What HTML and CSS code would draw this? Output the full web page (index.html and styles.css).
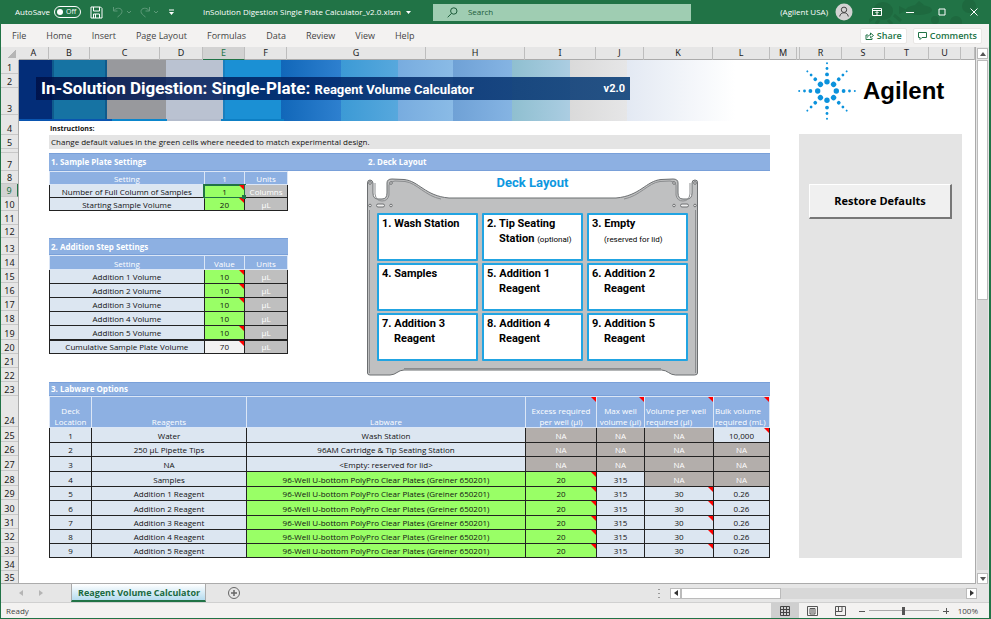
FILE: index.html
```html
<!DOCTYPE html>
<html lang="en">
<head>
<meta charset="utf-8">
<title>InSolution Digestion Single Plate Calculator</title>
<link rel="stylesheet" href="styles.css">
</head>
<body>
<div class="app">
  <header class="titlebar">
    <label class="autosave">AutoSave <input type="checkbox" class="switch-input"><span class="switch">Off</span></label>
    <button class="tool" aria-label="Save"><svg width="13" height="13" viewBox="0 0 13 13" fill="none" stroke="#fff"><path d="M1 1h9.500l1.500 1.500V12H1zM3.500 1v4h6V1M3.500 12V8h6v4M5.500 8v4"/></svg></button>
    <button class="tool undo" aria-label="Undo"><svg width="20" height="12" viewBox="0 0 20 12" fill="none" stroke="#5d9a79"><path d="M1.500 1v4h4M1.500 5C4 1 10 1.500 10 5.500c0 2-2 3.500-4.500 5.500M15 5l2 2 2-2"/></svg></button>
    <button class="tool redo" aria-label="Redo"><svg width="20" height="12" viewBox="0 0 20 12" fill="none" stroke="#5d9a79"><path d="M10.500 1v4h-4M10.500 5C8 1 2 1.500 2 5.500c0 2 2 3.500 4.500 5.500M15 5l2 2 2-2"/></svg></button>
    <button class="tool more" aria-label="Customize toolbar"><svg width="7" height="7" viewBox="0 0 7 7"><path d="M1 1h5" stroke="#fff"/><path d="M1 3h5L3.500 6z" fill="#fff"/></svg></button>
    <span class="filename">InSolution Digestion Single Plate Calculator_v2.0.xlsm <svg width="5" height="3" viewBox="0 0 5 3"><path d="M0 0h5L2.500 3z" fill="#fff"/></svg></span>
    <label class="search"><svg width="11" height="11" viewBox="0 0 11 11" fill="none" stroke="#1d5c3a"><circle cx="6.800" cy="4" r="3.200"/><path d="M4.500 6.400L.7 10.300"/></svg><input type="search" placeholder="Search" aria-label="Search"></label>
    <div class="account">
      <svg class="doodle" viewBox="0 0 120 24" aria-hidden="true"><g fill="#1e693f"><ellipse cx="14" cy="11" rx="10" ry="9"/><path d="M5 17l-6 5M10 20l-3 4M19 20l4 4M25 15l7 6" stroke="#1e693f" stroke-width="3"/><ellipse cx="50" cy="10" rx="13" ry="5"/><path d="M38 10l-8-4v8zM46 5l4-4 5 4z"/><circle cx="87" cy="22" r="6"/><circle cx="66" cy="20" r="4"/><circle cx="100" cy="6" r="7"/></g></svg>
      <span class="user">(Agilent USA)</span>
      <svg class="avatar" width="18" height="18" viewBox="0 0 18 18"><circle cx="9" cy="9" r="8.500" fill="#d2d2d2"/><g fill="none" stroke="#444"><circle cx="9" cy="6.800" r="2.700"/><path d="M4.700 13.500c.5-5 8.100-5 8.600 0"/></g></svg>
      <button class="tool" aria-label="Ribbon display"><svg width="10" height="8" viewBox="0 0 10 8" fill="none" stroke="#fff"><path d="M.5.5h9v7h-9zM.5 2.500h9M5 7V4M3.500 5L5 3.500 6.500 5"/></svg></button>
      <button class="tool" aria-label="Minimize"><svg width="8" height="8" viewBox="0 0 8 8"><path d="M0 4.500h8" stroke="#fff"/></svg></button>
      <button class="tool" aria-label="Maximize"><svg width="8" height="8" viewBox="0 0 8 8"><path d="M1 1h6v6H1z" fill="none" stroke="#fff"/></svg></button>
      <button class="tool" aria-label="Close"><svg width="8" height="8" viewBox="0 0 8 8"><path d="M.5.5l7 7M7.500.5l-7 7" stroke="#fff"/></svg></button>
    </div>
  </header>

  <nav class="ribbon">
    <a href="#">File</a><a href="#">Home</a><a href="#">Insert</a><a href="#">Page Layout</a><a href="#">Formulas</a><a href="#">Data</a><a href="#">Review</a><a href="#">View</a><a href="#">Help</a>
    <span class="grow"></span>
    <div class="pills">
      <button class="pill"><svg width="9" height="8" viewBox="0 0 9 8" fill="none" stroke="#217346"><path d="M3 3H1v4.500h6V6M2.500 5.500C3 3.500 4 3 5.500 3V1l3 2.500-3 2.300V4.300"/></svg>Share</button>
      <button class="pill"><svg width="9" height="8" viewBox="0 0 9 8" fill="none" stroke="#217346"><path d="M.5.500h8v5H4L2 7.500v-2H.5z"/></svg>Comments</button>
    </div>
  </nav>

  <div class="sheet">
    <div class="grid">
      <div class="corner"></div>
      <div class="cols">
        <span>A</span><span>B</span><span>C</span><span>D</span><span class="on">E</span><span>F</span><span>G</span><span>H</span><span>I</span><span>J</span><span>K</span><span>L</span><span>M</span><span></span><span>R</span><span>S</span><span>T</span><span>U</span><span></span>
      </div>
      <div class="rows">
        <span>1</span><span>2</span><span>3</span><span>4</span><span>5</span><span></span><span>7</span><span>8</span><span class="on">9</span><span>10</span><span>11</span><span>12</span><span>13</span><span>14</span><span>15</span><span>16</span><span>17</span><span>18</span><span>19</span><span>20</span><span>21</span><span>22</span><span>23</span><span>24</span><span>25</span><span>26</span><span>27</span><span>28</span><span>29</span><span>30</span><span>31</span><span>32</span><span>33</span><span>34</span><span>35</span>
      </div>
      <main class="page">
        <div class="top">
          <div class="banner">
            <h1><span>In-Solution Digestion: Single-Plate: <small>Reagent Volume Calculator</small></span><small>v2.0</small></h1>
          </div>
          <div class="brand">
            <svg width="60" height="60" viewBox="-30 -30 60 60" fill="#0b92dc">
              <defs><g id="ray"><circle cx="9.300" r="2.700"/><circle cx="16.600" r="1.900"/><circle cx="22.500" r="1.400"/><circle cx="27.800" r="1"/></g></defs>
              <use href="#ray"/><use href="#ray" transform="rotate(45)"/><use href="#ray" transform="rotate(90)"/><use href="#ray" transform="rotate(135)"/><use href="#ray" transform="rotate(180)"/><use href="#ray" transform="rotate(225)"/><use href="#ray" transform="rotate(270)"/><use href="#ray" transform="rotate(315)"/>
            </svg>
            <span>Agilent</span>
          </div>
        </div>
        <div class="below">
          <div class="work">
            <p class="label">Instructions:</p>
            <p class="note-line">Change default values in the green cells where needed to match experimental design.</p>
            <div class="band two"><h2>1. Sample Plate Settings</h2><h2>2. Deck Layout</h2></div>
            <div class="middle">
              <div class="settings">
                <table class="set sample">
                  <colgroup><col class="c-name"><col class="c-val"><col class="c-unit"></colgroup>
                  <thead><tr><th>Setting</th><th>1</th><th>Units</th></tr></thead>
                  <tbody>
                    <tr><td>Number of Full Column of Samples</td><td class="in flag selected">1</td><td class="unit">Columns</td></tr>
                    <tr><td>Starting Sample Volume</td><td class="in flag">20</td><td class="unit">µL</td></tr>
                  </tbody>
                </table>
                <h2 class="band step">2. Addition Step Settings</h2>
                <table class="set addition">
                  <colgroup><col class="c-name"><col class="c-val"><col class="c-unit"></colgroup>
                  <thead><tr><th>Setting</th><th>Value</th><th>Units</th></tr></thead>
                  <tbody>
                    <tr><td>Addition 1 Volume</td><td class="in flag">10</td><td class="unit">µL</td></tr>
                    <tr><td>Addition 2 Volume</td><td class="in flag">10</td><td class="unit">µL</td></tr>
                    <tr><td>Addition 3 Volume</td><td class="in flag">10</td><td class="unit">µL</td></tr>
                    <tr><td>Addition 4 Volume</td><td class="in">10</td><td class="unit">µL</td></tr>
                    <tr><td>Addition 5 Volume</td><td class="in flag">10</td><td class="unit">µL</td></tr>
                    <tr class="sum"><td>Cumulative Sample Plate Volume</td><td class="flag total">70</td><td class="unit">µL</td></tr>
                  </tbody>
                </table>
              </div>
              <section class="deck">
                <svg class="plate" viewBox="0 0 331 200" preserveAspectRatio="none" aria-hidden="true">
                  <path d="M.5 6Q.5 3 3 3t3 3v10q0 6 5 6h4q5 0 5-6V6q0-4 5-4l12 .5C52 4 58 19 82 21h167c24-2 30-17 45-18.500L306 2q5 0 5 4v10q0 6 5 6h4q5 0 5-6V6q0-3 3-3t2.500 3v190q0 2-3 2h-19c-6 0-8-5-14-5H37c-6 0-8 5-14 5H3q-2.500 0-2.500-2z" fill="#bfc0c1" stroke="#6b6e70"/>
                  <path d="M2.500 33v163M328.500 33v163M37 191.500h257" stroke="#8b8d8f" fill="none"/>
                  <path d="M8 6v11q1 7 7 7t7-6V8q1-4 6-4l10 .5C50 6 58 19 74 22M323 6v11q-1 7-7 7t-7-6V8q-1-4-6-4l-10 .5C281 6 273 19 257 22" stroke="#8b8d8f" fill="none"/>
                  <g fill="#eee" stroke="#6e7072"><rect x="9.500" y="27" width="8" height="3" rx="1.500"/><rect x="313.500" y="27" width="8" height="3" rx="1.500"/><circle cx="3" cy="28.500" r="1.300"/><circle cx="24" cy="28.500" r="1.300"/><circle cx="307" cy="28.500" r="1.300"/><circle cx="328" cy="28.500" r="1.300"/><circle cx="3" cy="6" r="1.300"/><circle cx="24" cy="6" r="1.300"/><circle cx="307" cy="6" r="1.300"/><circle cx="328" cy="6" r="1.300"/></g>
                </svg>
                <h3>Deck Layout</h3>
                <ol>
                  <li>1. Wash Station</li>
                  <li>2. Tip Seating<br>Station <small>(optional)</small></li>
                  <li>3. Empty<br><small>(reserved for lid)</small></li>
                  <li>4. Samples</li>
                  <li>5. Addition 1<br>Reagent</li>
                  <li>6. Addition 2<br>Reagent</li>
                  <li>7. Addition 3<br>Reagent</li>
                  <li>8. Addition 4<br>Reagent</li>
                  <li>9. Addition 5<br>Reagent</li>
                </ol>
              </section>
            </div>
            <h2 class="band lab">3. Labware Options</h2>
            <table class="labware">
              <colgroup><col class="l1"><col class="l2"><col class="l3"><col class="l4"><col class="l5"><col class="l6"><col class="l7"></colgroup>
              <thead><tr><th>Deck<br>Location</th><th>Reagents</th><th>Labware</th><th class="flag">Excess required<br>per well (µl)</th><th class="flag">Max well<br>volume (µl)</th><th class="flag left">Volume per well<br>required (µl)</th><th class="flag left">Bulk volume<br>required (mL)</th></tr></thead>
              <tbody>
                <tr><td>1</td><td>Water</td><td>Wash Station</td><td class="na">NA</td><td class="na">NA</td><td class="na">NA</td><td class="flag">10,000</td></tr>
                <tr><td>2</td><td>250 µL Pipette Tips</td><td>96AM Cartridge &amp; Tip Seating Station</td><td class="na">NA</td><td class="na">NA</td><td class="na">NA</td><td class="na">NA</td></tr>
                <tr><td>3</td><td>NA</td><td>&lt;Empty: reserved for lid&gt;</td><td class="na">NA</td><td class="na">NA</td><td class="na">NA</td><td class="na">NA</td></tr>
                <tr><td>4</td><td>Samples</td><td class="in">96-Well U-bottom PolyPro Clear Plates (Greiner 650201)</td><td class="in flag">20</td><td>315</td><td class="na">NA</td><td class="na">NA</td></tr>
                <tr><td>5</td><td>Addition 1 Reagent</td><td class="in">96-Well U-bottom PolyPro Clear Plates (Greiner 650201)</td><td class="in flag">20</td><td>315</td><td class="flag">30</td><td>0.26</td></tr>
                <tr><td>6</td><td>Addition 2 Reagent</td><td class="in">96-Well U-bottom PolyPro Clear Plates (Greiner 650201)</td><td class="in flag">20</td><td>315</td><td class="flag">30</td><td>0.26</td></tr>
                <tr><td>7</td><td>Addition 3 Reagent</td><td class="in">96-Well U-bottom PolyPro Clear Plates (Greiner 650201)</td><td class="in flag">20</td><td>315</td><td class="flag">30</td><td>0.26</td></tr>
                <tr><td>8</td><td>Addition 4 Reagent</td><td class="in">96-Well U-bottom PolyPro Clear Plates (Greiner 650201)</td><td class="in flag">20</td><td>315</td><td class="flag">30</td><td>0.26</td></tr>
                <tr><td>9</td><td>Addition 5 Reagent</td><td class="in">96-Well U-bottom PolyPro Clear Plates (Greiner 650201)</td><td class="in flag">20</td><td>315</td><td class="flag">30</td><td>0.26</td></tr>
              </tbody>
            </table>
          </div>
          <aside class="panel"><button class="restore">Restore Defaults</button></aside>
        </div>
      </main>
    </div>
    <div class="vscroll">
      <button aria-label="Scroll up"><svg width="6" height="4" viewBox="0 0 6 4"><path d="M0 4h6L3 0z" fill="#555"/></svg></button>
      <div class="track"><div class="thumb"></div></div>
      <button aria-label="Scroll down"><svg width="6" height="4" viewBox="0 0 6 4"><path d="M0 0h6L3 4z" fill="#555"/></svg></button>
    </div>
  </div>

  <div class="tabs">
    <button class="step-btn" aria-label="Previous sheet"><svg width="4" height="6" viewBox="0 0 4 6"><path d="M4 0v6L0 3z" fill="#b5b5b5"/></svg></button>
    <button class="step-btn" aria-label="Next sheet"><svg width="4" height="6" viewBox="0 0 4 6"><path d="M0 0v6l4-3z" fill="#b5b5b5"/></svg></button>
    <a class="tab" href="#">Reagent Volume Calculator</a>
    <button class="add" aria-label="New sheet"><svg width="12" height="12" viewBox="0 0 12 12" fill="none" stroke="#666"><circle cx="6" cy="6" r="5.500"/><path d="M3 6h6M6 3v6" stroke-width="1.500"/></svg></button>
    <span class="grow"></span>
    <svg class="dots" width="2" height="9" viewBox="0 0 2 9" fill="#999"><path d="M0 0h2v1H0zM0 4h2v1H0zM0 8h2v1H0z"/></svg>
    <div class="hscroll">
      <button aria-label="Scroll left"><svg width="4" height="6" viewBox="0 0 4 6"><path d="M4 0v6L0 3z" fill="#333"/></svg></button>
      <div class="track"><div class="thumb"></div></div>
      <button aria-label="Scroll right"><svg width="4" height="6" viewBox="0 0 4 6"><path d="M0 0v6l4-3z" fill="#333"/></svg></button>
    </div>
  </div>

  <footer class="status">
    <span>Ready</span>
    <span class="grow"></span>
    <button class="view on" aria-label="Normal view"><svg width="10" height="10" viewBox="0 0 10 10" fill="none" stroke="#444"><path d="M.5.5h9v9h-9zM3.500 0v10M6.500 0v10M0 3.500h10M0 6.500h10"/></svg></button>
    <button class="view" aria-label="Page layout view"><svg width="11" height="10" viewBox="0 0 11 10" fill="none" stroke="#555"><path d="M.5.5h10v9H.5zM3 2.500h5v5.500H3zM4 4h3M4 6h3"/></svg></button>
    <button class="view" aria-label="Page break view"><svg width="11" height="10" viewBox="0 0 11 10" fill="none" stroke="#555"><path d="M.5.5h10v9H.5zM3.500 0v5.500M7 0v5.500M0 5.500h7"/></svg></button>
    <button class="zoom-btn" aria-label="Zoom out"><svg width="6" height="6" viewBox="0 0 6 6"><path d="M0 3.500h6" stroke="#555"/></svg></button>
    <input class="zoom" type="range" min="0" max="100" value="50" aria-label="Zoom">
    <button class="zoom-btn" aria-label="Zoom in"><svg width="6" height="6" viewBox="0 0 6 6"><path d="M0 3.500h6M3.500 0v6" stroke="#555"/></svg></button>
    <span class="percent">100%</span>
  </footer>
</div>
</body>
</html>
```
FILE: styles.css
```css
* { box-sizing: border-box; }
body { margin: 0; font: 9px/12px "Open Sans", "Noto Sans", sans-serif; color: #333; }
button { border: 0; padding: 0; background: none; font: inherit; color: inherit; display: flex; align-items: center; justify-content: center; }
a { color: inherit; text-decoration: none; }
h1, h2, h3, p, ol { margin: 0; padding: 0; list-style: none; }
svg { display: block; flex: none; }
.grow { flex: 1; }

.app { min-height: 100vh; display: flex; flex-direction: column; background: #e6e6e6; border: solid #217346; border-width: 0 2px 1px 1px; }

.titlebar { display: flex; align-items: center; height: 24px; background: #217346; color: #fff; font-size: 8px; }
.autosave { display: flex; align-items: center; gap: 4px; margin-left: 14px; }
.switch-input { position: absolute; opacity: 0; width: 1px; height: 1px; }
.switch { display: flex; align-items: center; gap: 3px; width: 27px; height: 12px; padding-left: 2px; border: 1px solid #fff; border-radius: 6px; font-size: 7px; }
.switch::before { content: ""; width: 6px; height: 6px; border-radius: 50%; background: #fff; }
.titlebar .tool { margin-left: 9px; }
.titlebar .redo { margin-left: 7px; }
.titlebar .more { margin-left: 9px; }
.filename { display: flex; align-items: center; gap: 5px; margin-left: 28px; white-space: nowrap; }
.search { display: flex; align-items: center; gap: 10px; flex: 1; max-width: 258px; height: 17px; margin-left: 22px; padding-left: 14px; background: #9fcdb2; }
.search input { flex: 1; min-width: 0; border: 0; padding: 0; background: none; font: inherit; outline: 0; }
.search input::placeholder { color: #1d5c3a; opacity: 1; }
.account { position: relative; display: flex; align-items: center; align-self: stretch; margin-left: auto; padding-right: 11px; }
.account .user { margin-right: 7px; }
.account .avatar, .account .user { position: relative; }
.account .tool { position: relative; margin-left: 24px; }
.account .avatar + .tool { margin-left: 19px; }
.doodle { position: absolute; right: 0; top: 0; width: 120px; height: 24px; }

.ribbon { display: flex; align-items: center; height: 23px; padding: 0 7px 0 11px; gap: 20px; background: #f3f2f1; color: #444; }
.ribbon a { white-space: nowrap; }
.pills { display: flex; gap: 6px; }
.pill { gap: 3px; height: 16px; padding: 0 4px; background: #fff; border: 1px solid #e9e7e5; border-radius: 2px; color: #217346; font-weight: 600; }

.sheet { flex: 1; display: flex; }
.grid { flex: 1; min-width: 0; display: grid; grid-template-columns: 18px 1fr; grid-template-rows: 13px 1fr; border-right: 1px solid #ababab; border-bottom: 1px solid #ababab; }
.corner { background: linear-gradient(135deg, transparent 50%, #b5b5b5 50%) no-repeat 6px 2px / 9px 9px; }
.cols { display: grid; grid-template-columns: 30fr 41fr 70fr 43fr 42fr 42fr 139fr 99fr 71fr 48fr 69fr 57fr 27fr 3fr 42fr 43fr 44fr 32fr 14fr; border-bottom: 1px solid #ababab; font: 9px/12px "Noto Sans", sans-serif; text-align: center; color: #222; }
.cols span { border-right: 1px solid #bdbdbd; }
.cols .on { background: #d2d2d2; color: #217346; border-bottom: 1px solid #217346; }
.rows { display: flex; flex-direction: column; border-right: 1px solid #ababab; font: 9px/11px "Noto Sans", sans-serif; color: #222; }
.rows span { display: flex; align-items: flex-end; justify-content: center; height: 14px; border-bottom: 1px solid #c8c8c8; }
.rows .on { background: #d2d2d2; color: #217346; border-right: 1px solid #217346; }
.rows span:nth-child(3) { height: 27px; }
.rows span:nth-child(4) { height: 20px; }
.rows span:nth-child(6) { height: 4px; }
.rows span:nth-child(7) { height: 18px; }
.rows span:nth-child(8), .rows span:nth-child(9), .rows span:nth-child(12) { height: 13px; }
.rows span:nth-child(13) { height: 17px; }
.rows span:nth-child(19) { height: 15px; }
.rows span:nth-child(24) { height: 31px; }
.rows span:nth-child(25), .rows span:nth-child(27), .rows span:nth-child(28), .rows span:nth-child(30) { height: 15px; }
.rows span:nth-child(35) { height: 12px; border: 0; }

.page { min-width: 0; background: #fff; color: #111; font: 8px/12px "Open Sans", sans-serif; }
.top { display: grid; grid-template-columns: 778fr 178fr; }
.banner { display: flex; align-items: flex-start; padding: 17px 167px 0 17px; height: 61px;
  background:
    linear-gradient(90deg, #0a55b0 0 12%, #0b86cc 12% 19%, #b4bccc 19% 26%, #0d7fc4 26% 34%, transparent 34%) no-repeat 0 100% / 100% 2px,
    linear-gradient(90deg, #032d78 0 33px, #0f5a8c 33px 35px, #1673a3 35px 86px, #0f5a8c 86px 88px, #98999d 88px 147px, #bac2d1 147px 204px, #1b7fbd 204px 206px, #1b90d4 206px 262px, #1167b9 262px, #2e80cf 322px, #3c9ad5 322px, #57a8dd 379px, #78acdf 379px, #8abbe6 434px, #6fa1d6 434px, #85b4e3 493px, #8fbfd0 493px, #abcde2 551px, #dadada 551px, #e6e6e7 608px, #e3e9f3 608px, #fff 716px); }
.banner h1 { flex: 1; display: flex; align-items: center; justify-content: space-between; height: 23px; padding: 0 5px; background: linear-gradient(90deg, rgba(0,16,70,.85), rgba(0,38,105,.85) 50%, rgba(14,66,122,.9)); color: #fff; font: bold 17px/23px Roboto, sans-serif; white-space: nowrap; }
.banner small { font-size: 13px; }
.banner h1 > small { font-size: 11px; }
.brand { display: flex; align-items: center; gap: 6px; color: #000; font: bold 24px/30px "Liberation Sans", sans-serif; }
.below { display: grid; grid-template-columns: 30fr 721fr 29fr 163fr 13fr; }
.work { grid-column: 2; min-width: 0; }
.label { height: 14px; padding: 2px 1px 0; font-weight: bold; font-size: 7px; }
.note-line { height: 14px; margin-bottom: 4px; padding: 0 2px; background: #e4e4e4; line-height: 14px; white-space: nowrap; }
.band { font-size: 8px; font-weight: bold; color: #fff; background: #8db0e2; border: solid #79a0d9; border-width: 1px 0; padding-left: 2px; }
.two { display: grid; grid-template-columns: 318fr 403fr; height: 18px; line-height: 16px; }
.two h2 { font: inherit; }
.middle { display: grid; grid-template-columns: minmax(0, 239fr) 79fr minmax(0, 331fr) 72fr; height: 211px; }
.step { height: 17px; margin-top: 27px; line-height: 15px; }

table { width: 100%; border-collapse: collapse; table-layout: fixed; line-height: 11px; text-align: center; }
th, td { position: relative; padding: 0; border: 1px solid #222; white-space: nowrap; }
th { background: #8db0e2; border-color: #dbe6f6; color: #fff; font-weight: normal; vertical-align: bottom; }
td { background: #dce6f1; }
td.in { background: #99ff66; }
td.total { background: #f2f2f2; }
td.unit { background: #bfbfbf; color: #fff; }
td.na { background: #b3aeab; color: #fff; }
.flag::after { content: ""; position: absolute; top: 0; right: 0; border-style: solid; border-width: 0 5px 5px 0; border-color: transparent #f00 transparent transparent; }
.selected { outline: 2px solid #217346; outline-offset: -1px; }
.selected::before { content: ""; position: absolute; right: -2px; bottom: -2px; width: 4px; height: 4px; background: #217346; z-index: 1; }
.c-name { width: 65%; }
.c-val { width: 17%; }
.sample tr { height: 13px; }
.addition tr { height: 14px; }
.sum td { border-top-width: 2px; }

.deck { grid-column: 3; position: relative; margin-top: 6px; height: 200px; padding: 0 10px; }
.plate { position: absolute; left: 0; top: 0; width: 100%; height: 100%; }
.deck h3, .deck ol { position: relative; }
.deck h3 { height: 36px; color: #0d98df; font: bold 13px/12px Roboto, sans-serif; text-align: center; }
.deck ol { display: grid; grid-template-columns: repeat(3, minmax(0, 1fr)); grid-auto-rows: 48px; gap: 2px 4px; color: #000; font: bold 11px/15px Roboto, sans-serif; }
.deck li { padding: 1px 0 0 15px; text-indent: -12px; border: 2px solid #21a4e2; border-radius: 1px; background: #fff; white-space: nowrap; }
.deck li small { font-size: 8px; font-weight: normal; }

.lab { height: 14px; line-height: 12px; }
.l1 { width: 42px; } .l2 { width: 155px; } .l4 { width: 71px; } .l5 { width: 48px; } .l6 { width: 69px; } .l7 { width: 56px; }
.labware tr { height: 14px; }
.labware thead tr { height: 31px; }
.labware tbody tr:nth-child(1), .labware tbody tr:nth-child(3), .labware tbody tr:nth-child(4), .labware tbody tr:nth-child(6) { height: 15px; }
.labware .left { text-align: left; padding-left: 1px; }

.panel { grid-column: 4; margin-top: 13px; padding: 50px 10px; background: #e4e4e4; }
.restore { width: 100%; height: 35px; background: #f0f0f0; border: solid; border-width: 1px 2px 2px 1px; border-color: #fff #777 #777 #fff; color: #000; font: bold 11px/16px "Open Sans", sans-serif; }

.vscroll { width: 13px; display: flex; flex-direction: column; align-items: center; padding: 1px 0 0; }
.vscroll button { width: 11px; height: 11px; background: #fff; border: 1px solid #bbb; }
.vscroll .track { flex: 1; width: 11px; margin: 1px 0 3px; background: #d8d8d8; }
.vscroll .thumb { height: 47%; background: #fff; border: 1px solid #bbb; }

.tabs { display: flex; align-items: center; height: 18px; padding-right: 12px; }
.step-btn { margin-left: 18px; }
.step-btn + .step-btn { margin-left: 16px; }
.tab { align-self: stretch; margin-left: 28px; padding: 0 5px 0 6px; background: linear-gradient(#fff, #b5dcef); border-bottom: 2px solid #217346; border-left: 1px solid #aaa; border-right: 1px solid #aaa; color: #1b6a3f; font-weight: bold; line-height: 17px; white-space: nowrap; }
.add { margin-left: 22px; }
.dots { margin-right: 10px; }
.hscroll { display: flex; width: 307px; height: 11px; }
.hscroll button { width: 11px; background: #fff; border: 1px solid #bbb; }
.hscroll .track { flex: 1; background: #d8d8d8; }
.hscroll .thumb { width: 35%; height: 100%; background: #fff; border: 1px solid #bbb; }

.status { display: flex; align-items: center; height: 16px; padding: 0 11px 0 5px; background: #f3f2f1; border-top: 1px solid #d0d0d0; font-size: 8px; color: #444; }
.view { width: 28px; height: 15px; }
.view.on { background: #cfcfcf; }
.zoom-btn { margin-left: 4px; }
.zoom { appearance: none; width: 70px; height: 10px; margin: 0 0 0 4px; background: linear-gradient(#aaa, #aaa) no-repeat center / 100% 1px; }
.zoom::-webkit-slider-thumb { appearance: none; width: 3px; height: 8px; background: #555; }
.percent { margin-left: 9px; }
```
